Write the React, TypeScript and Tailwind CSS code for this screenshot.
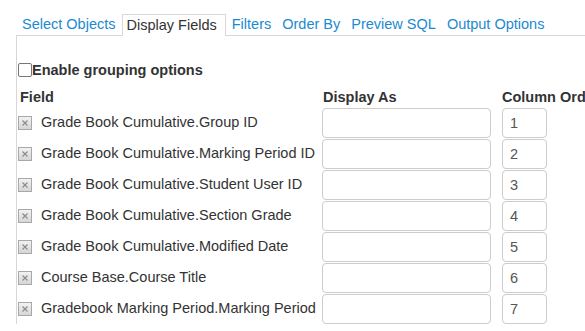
import React from "react"

const tabs = ["Select Objects", "Display Fields", "Filters", "Order By", "Preview SQL", "Output Options"]

const fields = [
  "Grade Book Cumulative.Group ID",
  "Grade Book Cumulative.Marking Period ID",
  "Grade Book Cumulative.Student User ID",
  "Grade Book Cumulative.Section Grade",
  "Grade Book Cumulative.Modified Date",
  "Course Base.Course Title",
  "Gradebook Marking Period.Marking Period",
]

function RemoveIcon() {
  return (
    <span className="inline-flex items-center justify-center w-[14px] h-[14px] border border-[#a8a8a8] bg-gradient-to-b from-[#f2f2f2] to-[#d6d6d6] shrink-0">
      <svg width="8" height="8" viewBox="0 0 8 8">
        <path d="M1.5 1.5 L6.5 6.5 M6.5 1.5 L1.5 6.5" stroke="#8a8a8a" strokeWidth="1.1" />
      </svg>
    </span>
  )
}

export default function App() {
  return (
    <div className="w-[585px] h-[331px] overflow-hidden bg-white text-[#333] font-['Liberation_Sans',Arial,sans-serif] text-[14.5px]">
      <div className="pl-[16px] pt-[14px]">
        <ul className="flex items-end h-[21px] pl-[1px]">
          {tabs.map((t) => {
            const active = t === "Display Fields"
            return (
              <li
                key={t}
                className={
                  active
                    ? "h-[22px] pl-[4px] pr-[8px] mr-[1px] border border-b-0 border-[#d8d8d8] bg-white text-[#333] leading-[20px] relative top-[1px] whitespace-nowrap"
                    : "h-[21px] px-[5px] mr-[1px] text-[#1a8ad1] leading-[20px] whitespace-nowrap"
                }
              >
                {t}
              </li>
            )
          })}
        </ul>
        <div className="border-l border-t border-[#d8d8d8] pt-[26px] pl-[1px]">
          <label className="flex items-center font-bold leading-[16px]">
            <span className="inline-block w-[14px] h-[14px] border border-[#767676] rounded-[2px] bg-white" />
            Enable grouping options
          </label>
          <div className="flex mt-[11px] font-bold leading-[16px] whitespace-nowrap">
            <div className="w-[304px] shrink-0 pl-[2px]">Field</div>
            <div className="w-[180px] shrink-0 pl-[1px]">Display As</div>
            <div className="shrink-0">Column Order</div>
          </div>
          <div className="mt-[2px]">
            {fields.map((f, i) => (
              <div key={f} className="flex items-center h-[31px]">
                <div className="w-[304px] shrink-0 flex items-center gap-[9px] whitespace-nowrap">
                  <RemoveIcon />
                  <span>{f}</span>
                </div>
                <div className="w-[180px] shrink-0">
                  <div className="w-[169px] h-[30px] border border-[#cccccc] rounded-[4px] bg-white" />
                </div>
                <div className="w-[45px] shrink-0 h-[30px] border border-[#cccccc] rounded-[4px] bg-white pl-[7px] leading-[28px] text-[#555]">
                  {i + 1}
                </div>
              </div>
            ))}
          </div>
        </div>
      </div>
    </div>
  )
}
